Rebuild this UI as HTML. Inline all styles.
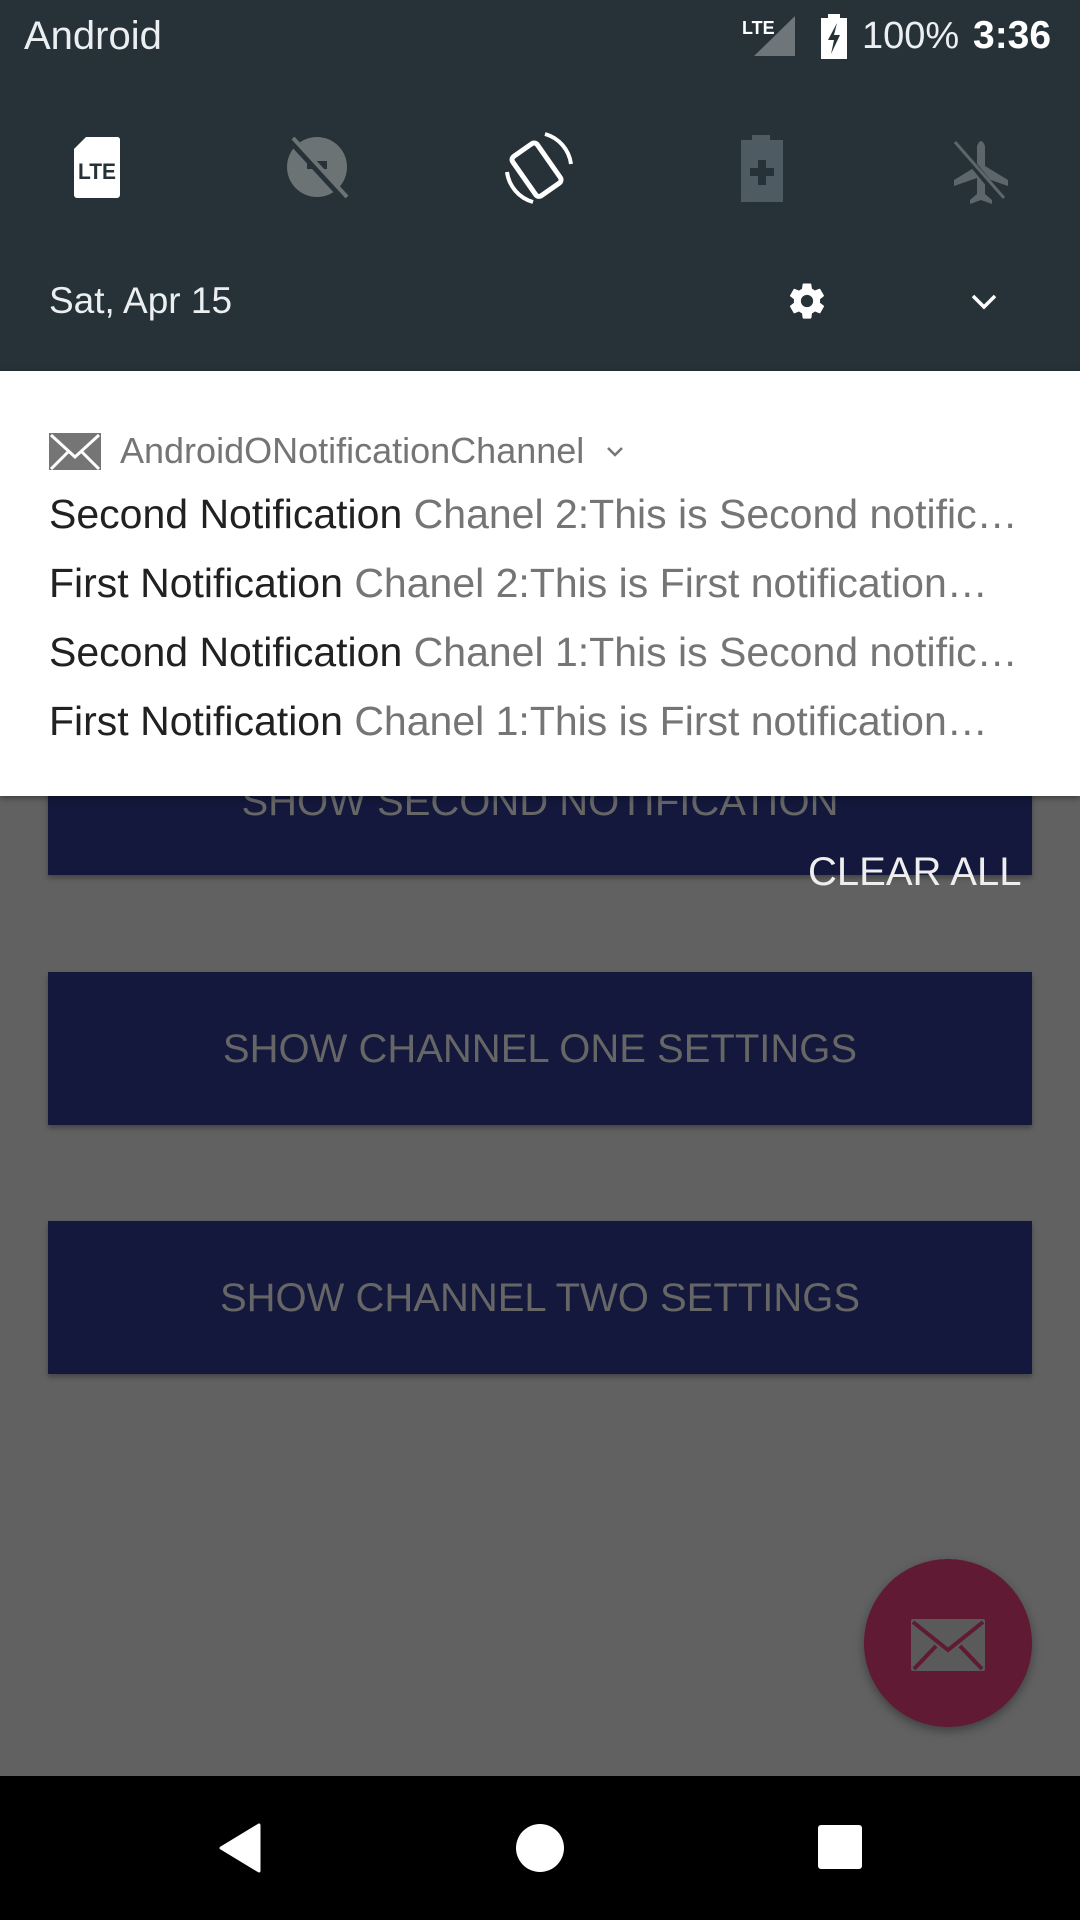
<!DOCTYPE html>
<html><head><meta charset="utf-8"><style>
*{margin:0;padding:0;box-sizing:border-box}
body{width:1080px;height:1920px;position:relative;overflow:hidden;background:#616161;font-family:"Liberation Sans",sans-serif}
.abs{position:absolute}
.top{left:0;top:0;width:1080px;height:371px;background:#263238}
.card{left:0;top:371px;width:1080px;height:425px;background:#fff;box-shadow:0 2px 6px rgba(0,0,0,.4)}
.btn{left:48px;width:984px;background:#13183c;box-shadow:0 3px 5px rgba(0,0,0,.3);color:#666;font-size:40px;text-align:center;letter-spacing:0}
.line{left:49px;font-size:41px;color:#212121;white-space:nowrap}
.line span{color:#757575}
</style></head><body>
<div class="abs" style="left:48px;top:740px;width:984px;height:135px;background:#13183c;box-shadow:0 3px 5px rgba(0,0,0,.3)"></div>
<div class="abs" style="left:0;top:780px;width:1080px;text-align:center;color:#666;font-size:40px">SHOW SECOND NOTIFICATION</div>
<div class="abs top"></div>
<div class="abs" style="left:24px;top:14px;color:#eceff1;font-size:40px">Android</div>
<svg class="abs" style="left:740px;top:14px" width="60" height="44"><text x="2" y="20" fill="#fff" font-size="18" font-family="Liberation Sans" font-weight="bold">LTE</text><polygon points="55,2 55,42 14,42" fill="#6f7679"/></svg>
<svg class="abs" style="left:820px;top:14px" width="30" height="46"><rect x="8" y="0" width="12" height="5" fill="#fff"/><rect x="1" y="4" width="26" height="41" fill="#fff"/><path d="M17 9 L8 26 L14 26 L11 40 L20 21 L14 21 Z" fill="#263238"/></svg>
<div class="abs" style="left:862px;top:15px;color:#eceff1;font-size:38px">100%</div>
<div class="abs" style="left:973px;top:14px;color:#fff;font-size:39px;font-weight:bold">3:36</div>
<!-- tiles -->
<svg class="abs" style="left:72px;top:135px" width="50" height="66"><path d="M14 2 H46 A3 3 0 0 1 48 5 V60 A3 3 0 0 1 45 63 H5 A3 3 0 0 1 2 60 V14 Z" fill="#fff"/><text x="6" y="44" font-size="22" font-weight="bold" fill="#263238" font-family="Liberation Sans" textLength="38" lengthAdjust="spacingAndGlyphs">LTE</text></svg>
<svg class="abs" style="left:285px;top:135px" width="64" height="70"><ellipse cx="32" cy="32" rx="30" ry="30" fill="#6b7375"/><rect x="22" y="26" width="20" height="8" fill="#263238"/><line x1="5" y1="4" x2="62" y2="66" stroke="#263238" stroke-width="8"/><line x1="8" y1="3" x2="62" y2="62" stroke="#6b7375" stroke-width="4"/></svg>
<svg class="abs" style="left:503px;top:130px" width="72" height="76" viewBox="0 0 72 76"><rect x="18" y="14" width="30" height="48" rx="4" transform="rotate(-35 36 38)" fill="none" stroke="#fff" stroke-width="5"/><path d="M42 4 A36 36 0 0 1 68 34" stroke="#fff" stroke-width="4" fill="none"/><path d="M30 72 A36 36 0 0 1 4 42" stroke="#fff" stroke-width="4" fill="none"/></svg>
<svg class="abs" style="left:740px;top:135px" width="44" height="70"><rect x="12" y="0" width="18" height="6" fill="#4f5b62"/><rect x="1" y="5" width="42" height="62" fill="#4f5b62"/><rect x="18" y="25" width="8" height="25" fill="#263238"/><rect x="10" y="33" width="24" height="8" fill="#263238"/></svg>
<svg class="abs" style="left:950px;top:138px" width="62" height="66"><path d="M27 8 Q31 -2 35 8 V28 L58 42 V48 L35 40 V56 L42 62 V66 L31 62 L20 66 V62 L27 56 V40 L4 48 V42 L27 28 Z" fill="#5d676b"/><line x1="3" y1="2" x2="54" y2="64" stroke="#263238" stroke-width="7"/><line x1="5" y1="4" x2="54" y2="60" stroke="#5d676b" stroke-width="3"/></svg>
<div class="abs" style="left:49px;top:280px;color:#eceff1;font-size:37px">Sat, Apr 15</div>
<svg class="abs" style="left:786px;top:280px" width="42" height="42" viewBox="0 0 24 24"><path fill="#fff" d="M19.4 13c.04-.32.06-.66.06-1s-.02-.68-.06-1l2.1-1.650a.5.5 0 0 0 .12-.64l-2-3.46a.5.5 0 0 0-.6-.22l-2.5 1a7.3 7.3 0 0 0-1.7-1l-.38-2.65A.49.49 0 0 0 14 2h-4a.49.49 0 0 0-.49.42l-.38 2.65c-.61.25-1.170.59-1.69 1l-2.49-1a.5.5 0 0 0-.61.22l-2 3.46a.49.49 0 0 0 .12.64L4.57 11c-.04.32-.07.66-.07 1s.03.68.07 1l-2.11 1.650a.5.5 0 0 0-.12.64l2 3.46c.12.22.39.3.61.22l2.49-1c.52.4 1.08.74 1.69 1l.38 2.65c.03.24.24.42.49.42h4c.25 0 .46-.18.49-.42l.38-2.650c.61-.26 1.170-.59 1.69-1l2.49 1c.23.09.49 0 .61-.22l2-3.46a.5.5 0 0 0-.12-.64L19.4 13zM12 15.5a3.5 3.5 0 1 1 0-7 3.5 3.5 0 0 1 0 7z"/></svg>
<svg class="abs" style="left:970px;top:292px" width="28" height="20"><path d="M3 4 L14 15 L25 4" stroke="#fff" stroke-width="3.5" fill="none"/></svg>
<!-- card -->
<div class="abs card"></div>
<svg class="abs" style="left:49px;top:433px" width="52" height="37"><rect x="0" y="0" width="52" height="37" fill="#757575"/><path d="M2 2 L26 24 L50 2" stroke="#fff" stroke-width="3" fill="none"/><path d="M2 36 L20 18 M50 36 L32 18" stroke="#fff" stroke-width="3"/></svg>
<div class="abs" style="left:120px;top:430px;font-size:36px;color:#757575">AndroidONotificationChannel</div>
<svg class="abs" style="left:605px;top:444px" width="20" height="16"><path d="M3 4 L10 11 L17 4" stroke="#757575" stroke-width="2.5" fill="none"/></svg>
<div class="abs line" style="top:491px">Second Notification <span>Chanel 2:This is Second notific…</span></div>
<div class="abs line" style="top:560px">First Notification <span>Chanel 2:This is First notification…</span></div>
<div class="abs line" style="top:629px">Second Notification <span>Chanel 1:This is Second notific…</span></div>
<div class="abs line" style="top:698px">First Notification <span>Chanel 1:This is First notification…</span></div>
<div class="abs" style="left:808px;top:850px;color:#eeeeee;font-size:40px">CLEAR ALL</div>
<div class="abs btn" style="top:972px;height:153px;line-height:155px">SHOW CHANNEL ONE SETTINGS</div>
<div class="abs btn" style="top:1221px;height:153px;line-height:155px">SHOW CHANNEL TWO SETTINGS</div>
<div class="abs" style="left:864px;top:1559px;width:168px;height:168px;border-radius:50%;background:#601a33;box-shadow:0 4px 10px rgba(0,0,0,.35)"></div>
<svg class="abs" style="left:911px;top:1619px" width="74" height="52"><rect x="0" y="0" width="74" height="52" rx="2" fill="#5a5a5a"/><path d="M2 3 L37 31 L72 3" stroke="#601a33" stroke-width="4" fill="none"/><path d="M3 50 L25 27 M71 50 L49 27" stroke="#601a33" stroke-width="4"/></svg>
<div class="abs" style="left:0;top:1776px;width:1080px;height:144px;background:#000"></div>
<svg class="abs" style="left:218px;top:1823px" width="44" height="50"><path d="M41 2 L41 48 L3 25 Z" fill="#fff" stroke="#fff" stroke-width="3" stroke-linejoin="round"/></svg>
<div class="abs" style="left:516px;top:1824px;width:48px;height:48px;border-radius:50%;background:#fff"></div>
<div class="abs" style="left:818px;top:1825px;width:44px;height:44px;border-radius:3px;background:#fff"></div>
</body></html>
